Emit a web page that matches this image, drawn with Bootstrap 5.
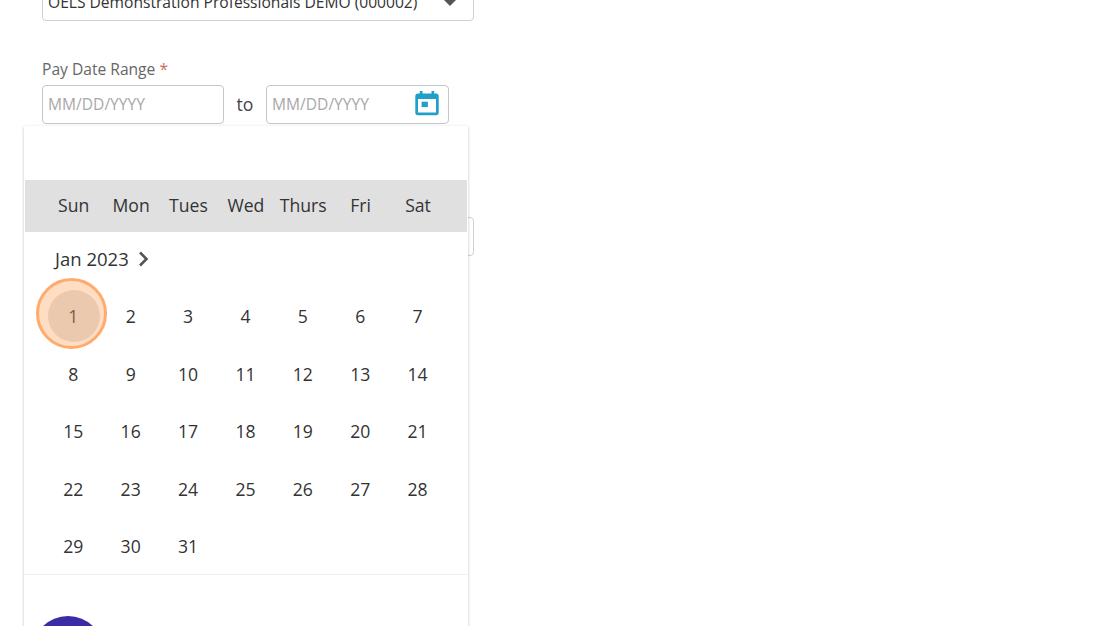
<!DOCTYPE html>
<html lang="en">
<head>
<meta charset="utf-8">
<title>Pay Date Range</title>
<link rel="stylesheet" href="https://cdn.jsdelivr.net/npm/bootstrap@5.3.0/dist/css/bootstrap.min.css">
<style>
html, body { height: 626px; overflow: hidden; background: #fff; }
body { font-family: "Open Sans", sans-serif; color: #333; position: relative; }
.stage { width: 432px; margin-left: 42px; margin-top: -18px; }
.fake-select { height: 39px; border: 1px solid #ced0d2; border-radius: 4px; font-size: 15.6px; line-height: 18px; padding: 0 5px; color: #333; white-space: nowrap; }
.fake-select .caret { width: 0; height: 0; border-left: 6px solid transparent; border-right: 6px solid transparent; border-top: 6px solid #555; margin-right: 12px; margin-top: 2px; }
.range-label { font-size: 15.6px; line-height: 22px; color: #666; margin-top: 37px; margin-bottom: 5px; }
.req { color: #cf6a62; }
.date-box { width: 182px; height: 39px; border: 1px solid #c4c6c8; border-radius: 4px; font-size: 15.6px; line-height: 20px; color: #a8a8a8; padding-left: 5px; padding-bottom: 2px; }
.date-box-end { width: 183px; }
.to-word { width: 42px; text-align: center; font-size: 17.6px; color: #444; }
.next-field { width: 432px; height: 39px; border: 1px solid #ced0d2; border-radius: 4px; margin-top: 93px; }
.picker { position: absolute; left: 24px; top: 126px; width: 444px; height: 520px; background: #fff; box-shadow: 0 1px 3px rgba(0,0,0,.24); overflow: hidden; }
.week-head { margin: 54px 1px 0 1px; height: 52px; background: #e0e0e0; padding-left: 20px; padding-bottom: 2px; }
.day-cell { width: 57.4px; text-align: center; font-size: 17.6px; color: #333; flex: none; }
.month-line { padding-left: 31px; margin-top: 14px; height: 26px; font-size: 18.5px; line-height: 26px; color: #333; gap: 9px; }
.day-grid { position: relative; z-index: 1; display: grid; grid-template-columns: repeat(7, 57.4px); grid-auto-rows: 57.5px; padding-left: 20.6px; margin-top: 16px; }
.day-grid .day-cell { line-height: 57.5px; width: auto; }
.picker-rule { border-top: 1px solid #f0f0f0; margin-top: -2px; }
.today-mark { position: absolute; left: 24px; top: 164px; width: 52px; height: 52px; border-radius: 50%; background: #e0e0e0; }
.spot { position: absolute; z-index: 2; left: 12px; top: 152px; width: 71px; height: 71px; border-radius: 50%; border: 3px solid #ffab6e; background: rgba(255,160,90,.36); }
.avatar { position: absolute; left: 8px; top: 490px; width: 72px; height: 72px; border-radius: 50%; background: #3a2ca5; }
.cal-icon { margin-right: 9px; margin-top: -1px; }
</style>
</head>
<body>
<div class="stage">
  <div class="fake-select d-flex justify-content-between align-items-center">
    <span>OELS Demonstration Professionals DEMO (000002)</span><span class="caret"></span>
  </div>
  <div class="range-label">Pay Date Range <span class="req">*</span></div>
  <div class="d-flex align-items-center">
    <div class="date-box d-flex align-items-center">MM/DD/YYYY</div>
    <div class="to-word">to</div>
    <div class="date-box date-box-end d-flex align-items-center justify-content-between">
      <span>MM/DD/YYYY</span>
      <svg class="cal-icon" width="24" height="27" viewBox="0 0 26 30" aria-hidden="true">
        <path fill="#20a0c8" d="M5 1h3v3h10V1h3v3h2a3 3 0 0 1 3 3v18a3 3 0 0 1-3 3H3a3 3 0 0 1-3-3V7a3 3 0 0 1 3-3h2z"/>
        <rect x="3" y="10" width="20" height="15" fill="#fff"/>
        <rect x="7" y="13" width="7" height="6" fill="#20a0c8"/>
      </svg>
    </div>
  </div>
  <div class="next-field"></div>
</div>
<div class="picker">
  <div class="week-head d-flex align-items-center">
    <div class="day-cell">Sun</div><div class="day-cell">Mon</div><div class="day-cell">Tues</div><div class="day-cell">Wed</div><div class="day-cell">Thurs</div><div class="day-cell">Fri</div><div class="day-cell">Sat</div>
  </div>
  <div class="month-line d-flex align-items-center">
    <span>Jan 2023</span>
    <svg width="11" height="16" viewBox="0 0 11 16" aria-hidden="true"><path d="M2 1.5 8.5 8 2 14.5" fill="none" stroke="#555" stroke-width="2.6"/></svg>
  </div>
  <div class="today-mark"></div>
  <div class="day-grid">
    <div class="day-cell">1</div><div class="day-cell">2</div><div class="day-cell">3</div><div class="day-cell">4</div><div class="day-cell">5</div><div class="day-cell">6</div><div class="day-cell">7</div>
    <div class="day-cell">8</div><div class="day-cell">9</div><div class="day-cell">10</div><div class="day-cell">11</div><div class="day-cell">12</div><div class="day-cell">13</div><div class="day-cell">14</div>
    <div class="day-cell">15</div><div class="day-cell">16</div><div class="day-cell">17</div><div class="day-cell">18</div><div class="day-cell">19</div><div class="day-cell">20</div><div class="day-cell">21</div>
    <div class="day-cell">22</div><div class="day-cell">23</div><div class="day-cell">24</div><div class="day-cell">25</div><div class="day-cell">26</div><div class="day-cell">27</div><div class="day-cell">28</div>
    <div class="day-cell">29</div><div class="day-cell">30</div><div class="day-cell">31</div>
  </div>
  <div class="picker-rule"></div>
  <div class="spot"></div>
  <div class="avatar"></div>
</div>
</body>
</html>
